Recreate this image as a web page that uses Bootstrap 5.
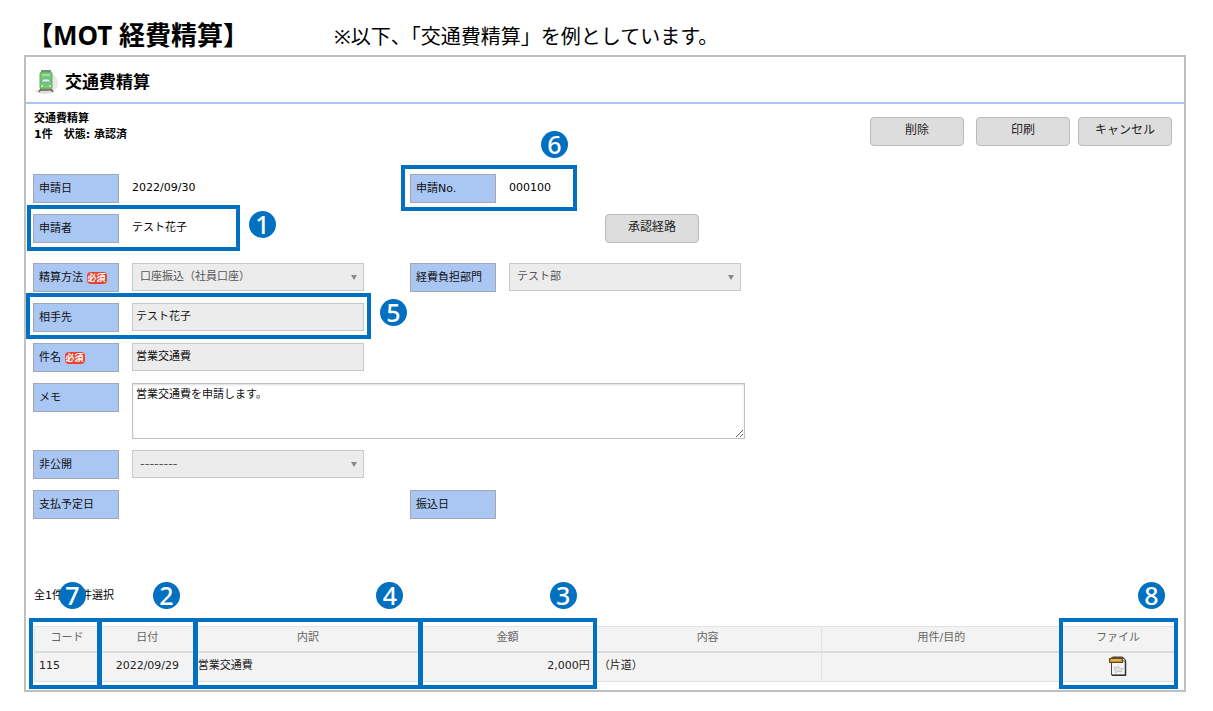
<!DOCTYPE html>
<html lang="ja">
<head>
<meta charset="utf-8">
<meta name="viewport" content="width=device-width, initial-scale=1">
<title>MOT 経費精算</title>
<link href="https://cdn.jsdelivr.net/npm/bootstrap@5.3.0/dist/css/bootstrap.min.css" rel="stylesheet">
<style>
  :root { --callout: #0070c0; }
  body { font-family: "Noto Sans", "Noto Sans CJK JP", sans-serif; color: #000; background: #fff; }
  .page { padding: 16px 27px 20px 24px; }
  .page-title { font-size: 26px; line-height: 36px; font-weight: 700; width: 310px; padding-left: 3px; }
  .page-note { font-size: 20px; line-height: 36px; padding-top: 4px; }
  .page-top { height: 38px; }
  .app-frame { border: 2px solid #bfbfbf; font-family: "DejaVu Sans", "Noto Sans CJK JP", sans-serif; font-size: 11px; line-height: 16px; margin-top: 1px; }
  .app-head { height: 47px; border-bottom: 2px solid #a9c4f5; padding: 4px 0 0 10px; gap: 6px; }
  .app-head h2 { font-size: 17px; line-height: 24px; font-weight: 700; margin: 0; }
  .toolbar { padding: 6px 12px 28px 8px; }
  .status-text { font-weight: 700; padding-top: 1px; }
  .tool-buttons { padding-top: 7px; }
  .btn-app { width: 94px; height: 29px; padding: 0 0 4px; font-size: 12px; line-height: 16px; color: #222; background: #ddd; border: 1px solid #bbb; border-radius: 4px; }
  .btn-app:hover { background: #d0d0d0; }
  .form-area { padding: 0 20px 0 7px; }
  .form-line { min-height: 29px; margin-bottom: 11px; }
  .line-wide-gap { margin-bottom: 20px; }
  .pair { position: relative; display: flex; gap: 13px; }
  .tag { flex: none; width: 86px; height: 29px; padding: 0 5px; border: 1px solid #a2a9b5; background: #aac6f3; line-height: 27px; color: #111; }
  .need { display: inline-block; font-family: "Noto Sans CJK JP", sans-serif; font-size: 9px; font-weight: 700; line-height: 12px; padding: 0 1px; border-radius: 4px; background: #e8432f; color: #fff; vertical-align: 0; }
  .plain { line-height: 27px; }
  .field { width: 232px; height: 28px; padding: 0 3px 4px; font-size: 11px; line-height: 16px; color: #111; background-color: #ececec; border: 1px solid #c8c8c8; border-radius: 0; opacity: 1; }
  select.field { appearance: none; padding: 0 20px 1px 7px; color: #555; background-image: url("data:image/svg+xml,%3Csvg xmlns='http://www.w3.org/2000/svg' width='6' height='5'%3E%3Cpath d='M0 0h6L3 5z' fill='%23888'/%3E%3C/svg%3E"); background-repeat: no-repeat; background-position: right 6px center; }
  select.field-dash { font-size: 13px; }
  .memo { width: 613px; height: 56px; flex: none; padding: 3px; font-size: 11px; line-height: 16px; border: 1px solid #c0c0c0; box-shadow: inset 0 1px 2px #ddd; resize: both; color: #111; }
  .route { margin-left: 195px; }
  .count-text { padding: 58px 0 22px 8px; }
  .list-area { padding: 0 9px 8px 8px; }
  .list { width: 100%; table-layout: fixed; border-collapse: collapse; background: #f3f3f3; }
  .list th, .list td { border: 1px solid #e2e2e2; padding: 0 4px; }
  .list th { position: relative; height: 25px; text-align: center; font-weight: 400; color: #666; line-height: 20px; padding-bottom: 2px; border-bottom: 2px solid #dcdcdc; }
  .list td { height: 30px; color: #222; padding-bottom: 2px; }
  .list td.flush { padding-left: 2px; }
  /* numbered call-outs laid over the form and the list */
  .ring { position: absolute; border: 4px solid var(--callout); pointer-events: none; z-index: 2; }
  .num { position: absolute; width: 27px; height: 27px; border-radius: 50%; background: var(--callout); color: #fff; font: 500 25px/26px "Noto Sans", sans-serif; text-align: center; }
  .ring-person { top: -9px; left: -6px; width: 213px; height: 46px; }
  .ring-payee { top: -10px; left: -7px; width: 345px; height: 46px; }
  .ring-number { top: -9px; left: -9px; width: 176px; height: 46px; }
  .num-beside { left: calc(100% + 13px); top: 2px; }
  .num-above { left: 136px; top: -38px; }
  .ring-col { top: -9px; left: -3px; right: -3px; height: 71px; }
  .ring-first { left: -6px; }
  .ring-last { right: -4px; }
  .ring-col .num { top: -40px; }
  .ring-col .at-start { left: 26px; }
  .ring-col .at-middle { left: 52px; }
  .ring-col .at-right { right: 16px; }
  .ring-col .at-edge { right: 9px; }
</style>
</head>
<body>
<main class="page">
  <header class="page-top d-flex align-items-center">
    <h1 class="page-title mb-0">【MOT 経費精算】</h1>
    <p class="page-note mb-0">※以下、「交通費精算」を例としています。</p>
  </header>

  <section class="app-frame">
    <div class="app-head d-flex align-items-center">
      <svg width="23" height="26" viewBox="0 0 23 26" aria-hidden="true">
        <ellipse cx="13" cy="14" rx="9" ry="10" fill="#e9e9e9"/><ellipse cx="9" cy="22" rx="9" ry="3" fill="#e0e0e0"/>
        <path d="M6 3V2h8v1" fill="none" stroke="#456b48" stroke-width="1.500"/>
        <rect x="4" y="3" width="12" height="17" rx="2" fill="#74c773" stroke="#63a767"/>
        <rect x="6" y="5" width="8" height="2" fill="#9fdc9a"/>
        <path d="M5 13l2-3h6l2 3z" fill="#dceefa" stroke="#6aa07c" stroke-width=".7"/>
        <path d="M5 17h2m6 0h2" stroke="#d5f5cc" stroke-width="1.500"/>
        <path d="M5 20l-2 3m12-3l2 3M5 21h10" stroke="#765f5c" stroke-width="1.500"/>
      </svg>
      <h2>交通費精算</h2>
    </div>

    <div class="toolbar d-flex justify-content-between">
      <div class="status-text">交通費精算<br>1件　状態: 承認済</div>
      <div class="tool-buttons d-flex">
        <button type="button" class="btn btn-app me-1">削除</button>
        <button type="button" class="btn btn-app ms-2 me-2">印刷</button>
        <button type="button" class="btn btn-app">キャンセル</button>
      </div>
    </div>

    <form class="form-area">
      <div class="row g-0 form-line">
        <div class="col-4 pair"><div class="tag">申請日</div><div class="plain">2022/09/30</div></div>
        <div class="col-4 pair"><div class="tag">申請No.</div><div class="plain">000100</div>
          <div class="ring ring-number"><span class="num num-above">6</span></div></div>
      </div>
      <div class="row g-0 form-line line-wide-gap">
        <div class="col-4 pair"><div class="tag">申請者</div><div class="plain">テスト花子</div>
          <div class="ring ring-person"><span class="num num-beside">1</span></div></div>
        <div class="col-4"><button type="button" class="btn btn-app route">承認経路</button></div>
      </div>
      <div class="row g-0 form-line">
        <div class="col-4 pair"><label class="tag" for="method">精算方法 <span class="need">必須</span></label>
          <select class="field" id="method" disabled><option>口座振込（社員口座）</option></select></div>
        <div class="col-4 pair"><label class="tag" for="dept">経費負担部門</label>
          <select class="field" id="dept" disabled><option>テスト部</option></select></div>
      </div>
      <div class="form-line row g-0">
        <div class="col-4 pair"><label class="tag" for="payee">相手先</label>
          <input class="field" id="payee" type="text" value="テスト花子" disabled>
          <div class="ring ring-payee"><span class="num num-beside">5</span></div></div>
      </div>
      <div class="form-line row g-0">
        <div class="col-4 pair"><label class="tag" for="subject">件名 <span class="need">必須</span></label>
          <input class="field" id="subject" type="text" value="営業交通費" disabled></div>
      </div>
      <div class="form-line row g-0">
        <div class="col-8 pair"><label class="tag" for="memo">メモ</label>
          <textarea class="memo" id="memo" readonly>営業交通費を申請します。</textarea></div>
      </div>
      <div class="form-line row g-0">
        <div class="col-4 pair"><label class="tag" for="private">非公開</label>
          <select class="field field-dash" id="private" disabled><option>--------</option></select></div>
      </div>
      <div class="form-line row g-0">
        <div class="col-4 pair"><div class="tag">支払予定日</div></div>
        <div class="col-4 pair"><div class="tag">振込日</div></div>
      </div>
    </form>

    <div class="count-text">全1件　0件選択</div>

    <div class="list-area">
      <table class="list">
        <colgroup>
          <col style="width:5.7%"><col style="width:8.4%"><col style="width:19.8%"><col style="width:15.2%"><col style="width:19.9%"><col style="width:21.1%"><col style="width:9.9%">
        </colgroup>
        <thead>
          <tr>
            <th scope="col">コード<div class="ring ring-col ring-first"><span class="num at-start">7</span></div></th>
            <th scope="col">日付<div class="ring ring-col"><span class="num at-middle">2</span></div></th>
            <th scope="col">内訳<div class="ring ring-col"><span class="num at-right">4</span></div></th>
            <th scope="col">金額<div class="ring ring-col"><span class="num at-right">3</span></div></th>
            <th scope="col">内容</th>
            <th scope="col">用件/目的</th>
            <th scope="col">ファイル<div class="ring ring-col ring-last"><span class="num at-edge">8</span></div></th>
          </tr>
        </thead>
        <tbody>
          <tr>
            <td>115</td>
            <td class="text-center">2022/09/29</td>
            <td class="flush">営業交通費</td>
            <td class="text-end">2,000円</td>
            <td>（片道）</td>
            <td></td>
            <td class="text-center">
              <svg width="18" height="20" viewBox="0 0 18 20" role="img" aria-label="ファイル">
                <path d="M2.500 4.500V19h14V4l-3-3h-10z" fill="#f4f4f4" stroke="#444"/>
                <path d="M16.500 5V19.500H3" fill="none" stroke="#333" stroke-width="1.500"/>
                <path d="M13 1v4h4z" fill="#fff" stroke="#444"/>
                <path d="M2.500 2.500v-1h10v1" fill="#f1dfae" stroke="#69481a"/>
                <rect x=".5" y="2.500" width="13" height="4" fill="#c08c28" stroke="#69481a"/>
                <path d="M2 4h10" stroke="#f4d98a"/>
                <path d="M5 11l3 1 1-2 3 3 2-1-2 4-3-1-2 2-1-3z" fill="#e2e2e2" stroke="#c4c4c4"/>
              </svg>
            </td>
          </tr>
        </tbody>
      </table>
    </div>
  </section>
</main>
<script src="https://cdn.jsdelivr.net/npm/bootstrap@5.3.0/dist/js/bootstrap.bundle.min.js"></script>
</body>
</html>
